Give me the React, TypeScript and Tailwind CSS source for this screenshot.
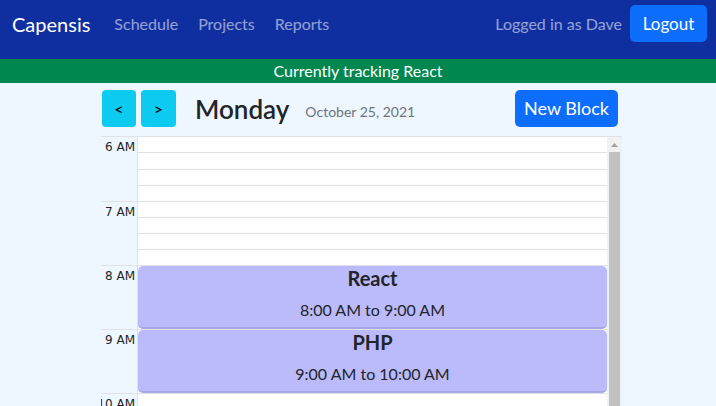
import type { ReactNode } from 'react';

const FONT = "font-['Lato','Noto_Sans',sans-serif]";

const hours = ['6 AM', '7 AM', '8 AM', '9 AM', '10 AM', '11 AM'];

interface BlockProps {
  title: string;
  time: string;
  top: number;
}

function Block({ title, time, top }: BlockProps) {
  return (
    <div
      className="absolute left-0 right-0 h-[63px] rounded-[5px] bg-[#bbbbfb] border-b-2 border-[#a7a7e8] text-center text-[#212529]"
      style={{ top }}
    >
      <div className="text-[20px] leading-[24px] font-bold">{title}</div>
      <div className="mt-2 text-[16px] leading-[24px]">{time}</div>
    </div>
  );
}

function NavLink({ children }: { children: ReactNode }) {
  return <span className="text-[16px] text-white/55">{children}</span>;
}

export default function App() {
  return (
    <div className={`h-screen overflow-hidden flex flex-col bg-[#eef6ff] ${FONT}`}>
      {/* Navbar */}
      <div className="h-[59px] shrink-0 bg-[#0f2e9f] flex items-start justify-between pl-3 pr-[9px] pt-[5px]">
        <div className="flex items-center h-[37px] gap-[20px]">
          <span className="text-[20px] text-white mr-[4px]">Capensis</span>
          <NavLink>Schedule</NavLink>
          <NavLink>Projects</NavLink>
          <NavLink>Reports</NavLink>
        </div>
        <div className="flex items-center h-[37px] gap-[8px]">
          <span className="text-[16px] text-white/55">Logged in as Dave</span>
          <button className="h-[37px] w-[77px] rounded-[5px] bg-[#0d6efd] text-white text-[17px]">Logout</button>
        </div>
      </div>

      {/* Tracking bar */}
      <div className="h-[24px] shrink-0 bg-[#00874f] text-white text-[16px] leading-[24px] text-center">
        Currently tracking React
      </div>

      {/* Main */}
      <div className="w-[521px] ml-[101px] pt-[7px] flex-1 flex flex-col min-h-0">
        <div className="h-[37px] flex items-center justify-between pl-px pr-[4px]">
          <div className="flex items-center">
            <button className="w-[34px] h-[37px] rounded-[4px] bg-[#0dcaf0] text-black text-[16px] font-medium">&lt;</button>
            <button className="ml-[5px] w-[35px] h-[37px] rounded-[4px] bg-[#0dcaf0] text-black text-[16px] font-medium">&gt;</button>
            <span className="ml-[19px] text-[26px] leading-[30px] font-semibold text-[#212529]">Monday</span>
            <span className="ml-[16px] mt-[6px] text-[14px] text-[#6c757d]">October 25, 2021</span>
          </div>
          <button className="h-[37px] w-[103px] rounded-[5px] bg-[#0d6efd] text-white text-[18px]">New Block</button>
        </div>

        {/* Calendar */}
        <div className="mt-[9px] flex-1 min-h-0 flex overflow-hidden border-t border-[#dee2e6]">
          <div className="w-[37px] shrink-0 border-r border-[#dee2e6]">
            {hours.map((h, i) => (
              <div
                key={h}
                className={`h-[64px] flex justify-end pr-[2px] pt-[3px] whitespace-nowrap font-['DejaVu_Sans',sans-serif] text-[12px] leading-[14px] text-[#212529] ${i > 0 ? 'border-t border-[#dee2e6]' : ''}`}
              >
                <span className="shrink-0">{h}</span>
              </div>
            ))}
          </div>
          <div className="relative flex-1 bg-white">
            {hours.map((h, i) => (
              <div key={h} className={`h-[64px] flex flex-col ${i > 0 ? 'border-t border-[#dee2e6]' : ''}`}>
                <div className="flex-1 border-b border-[#dee2e6]" />
                <div className="flex-1 border-b border-[#dee2e6]" />
                <div className="flex-1 border-b border-[#dee2e6]" />
                <div className="flex-1" />
              </div>
            ))}
            <Block title="React" time="8:00 AM to 9:00 AM" top={129} />
            <Block title="PHP" time="9:00 AM to 10:00 AM" top={193} />
          </div>
          {/* Scrollbar */}
          <div className="w-[15px] shrink-0 bg-[#f1f1f1] flex flex-col items-center">
            <div className="h-[15px] flex items-center justify-center">
              <svg width="7" height="4" viewBox="0 0 7 4">
                <path d="M3.5 0L7 4H0z" fill="#a3a3a3" />
              </svg>
            </div>
            <div className="w-[11px] flex-1 bg-[#c1c1c1]" />
          </div>
        </div>
      </div>
    </div>
  );
}
